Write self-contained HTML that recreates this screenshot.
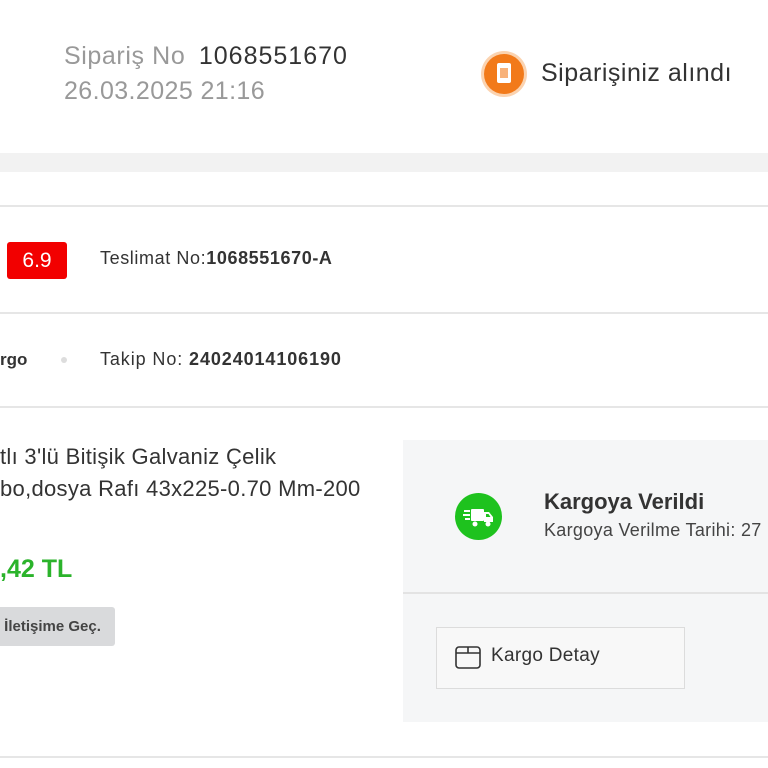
<!DOCTYPE html>
<html><head><meta charset="utf-8"><style>
*{margin:0;padding:0;box-sizing:border-box}
body{width:768px;height:768px;background:#fff;position:relative;overflow:hidden;font-family:"Liberation Sans",sans-serif;color:#333}
.a{position:absolute;white-space:nowrap}
.hl{position:absolute;left:0;width:768px;height:2px;background:#e6e6e6}
</style></head><body>
<div class="a" style="left:64px;top:42px;font-size:25px;color:#999;letter-spacing:0.6px">Sipariş No <span style="color:#333;margin-left:6px;letter-spacing:1px">1068551670</span></div>
<div class="a" style="left:64px;top:77px;font-size:25px;color:#999;letter-spacing:0.4px">26.03.2025 21:16</div>
<div class="a" style="left:484px;top:54px;width:40px;height:40px;border-radius:50%;background:#f27a1a;box-shadow:0 0 0 3px #fbd3b0"></div>
<div class="a" style="left:497px;top:63px;width:14px;height:20px;background:#fff;border-radius:2px"></div>
<div class="a" style="left:500px;top:68px;width:8px;height:10px;background:#f8b27a"></div>
<div class="a" style="left:541px;top:59px;font-size:25px;color:#333;letter-spacing:0.5px;font-weight:500">Siparişiniz alındı</div>
<div class="a" style="left:0;top:153px;width:768px;height:19px;background:#f2f2f2"></div>
<div class="hl" style="top:205px"></div>
<div class="a" style="left:7px;top:242px;width:60px;height:37px;background:#f20000;border-radius:3px;color:#fff;font-size:21px;text-align:center;line-height:37px">6.9</div>
<div class="a" style="left:100px;top:248px;font-size:18px;color:#333;letter-spacing:0.6px">Teslimat No:<b>1068551670-A</b></div>
<div class="hl" style="top:312px"></div>
<div class="a" style="left:0;top:350px;font-size:17px;font-weight:bold;color:#333">rgo</div>
<div class="a" style="left:61px;top:357px;width:6px;height:6px;border-radius:50%;background:#ddd"></div>
<div class="a" style="left:100px;top:349px;font-size:18px;color:#333;letter-spacing:0.9px">Takip No: <b>24024014106190</b></div>
<div class="hl" style="top:406px"></div>
<div class="a" style="left:0;top:441px;font-size:22px;color:#333;line-height:32px;letter-spacing:0.3px">tlı 3'lü Bitişik Galvaniz Çelik<br>bo,dosya Rafı 43x225-0.70 Mm-200</div>
<div class="a" style="left:0;top:555px;font-size:25px;color:#2bb32b;font-weight:bold">,42 TL</div>
<div class="a" style="left:0;top:607px;width:115px;height:39px;background:#d9dadc;border-radius:0 3px 3px 0;font-size:15px;font-weight:bold;color:#444;line-height:39px">&nbsp;İletişime Geç.</div>
<div class="a" style="left:403px;top:440px;width:365px;height:282px;background:#f5f6f7"></div>
<div class="a" style="left:403px;top:592px;width:365px;height:2px;background:#e3e3e3"></div>
<div class="a" style="left:455px;top:493px;width:47px;height:47px;border-radius:50%;background:#1ec21e"></div>
<svg class="a" style="left:459px;top:497px" width="40" height="40" viewBox="0 0 40 40"><g fill="#fff"><rect x="12" y="12" width="13" height="12" rx="1"/><path d="M25 15h5l4 5v5h-9z"/><circle cx="16" cy="27" r="2.5"/><circle cx="29" cy="27" r="2.5"/><rect x="5" y="13" width="6" height="2"/><rect x="4" y="17" width="7" height="2"/><rect x="6" y="21" width="5" height="2"/></g><path d="M27 17h2.5l2 3H27z" fill="#1ec21e"/></svg>
<div class="a" style="left:544px;top:489px;font-size:22px;font-weight:bold;color:#333;letter-spacing:0px">Kargoya Verildi</div>
<div class="a" style="left:544px;top:520px;font-size:18px;color:#444;letter-spacing:0.3px">Kargoya Verilme Tarihi: 27</div>
<div class="a" style="left:436px;top:627px;width:249px;height:62px;border:1px solid #dcdcdc;background:#f8f8f8"></div>
<svg class="a" style="left:453px;top:642px" width="30" height="30" viewBox="0 0 30 30"><g fill="none" stroke="#333" stroke-width="1.6"><rect x="3" y="5" width="24" height="21" rx="3"/><path d="M3 11h24M15 5v6"/></g></svg>
<div class="a" style="left:491px;top:645px;font-size:19px;color:#333;letter-spacing:0.3px">Kargo Detay</div>
<div class="hl" style="top:756px"></div>
</body></html>
